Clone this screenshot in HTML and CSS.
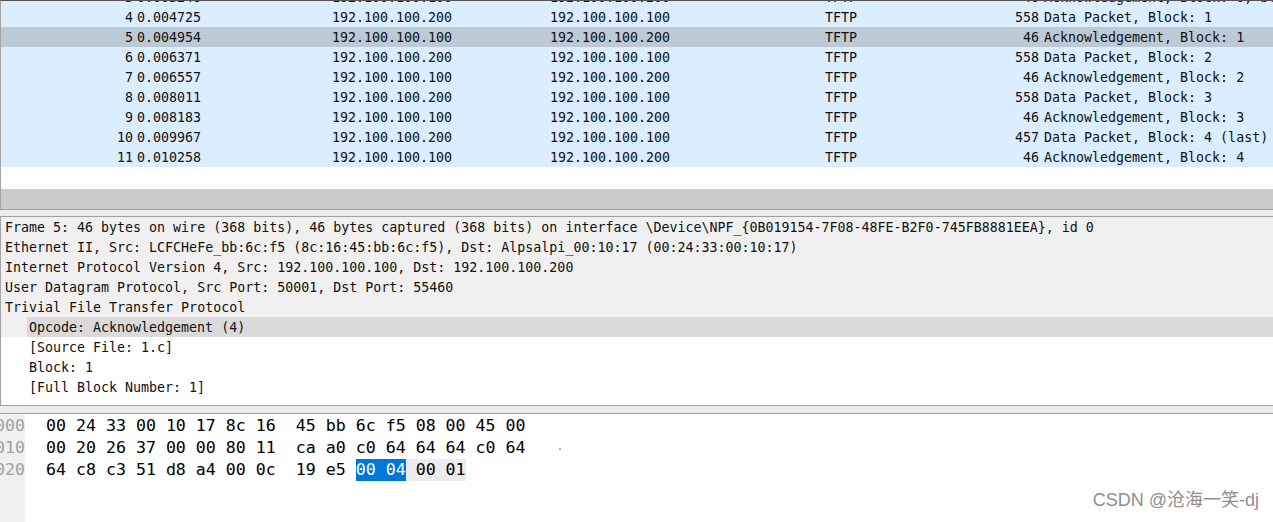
FILE: index.html
```html
<!DOCTYPE html>
<html>
<head>
<meta charset="utf-8">
<link rel="stylesheet" href="styles.css">
</head>
<body>
<div class="app">
  <div class="plist">
    <div class="prow partial"><span class="c-no">3</span><span class="c-time">0.003248</span><span class="c-src">192.100.100.100</span><span class="c-dst">192.100.100.200</span><span class="c-proto">TFTP</span><span class="c-len">46</span><span class="c-info">Acknowledgement, Block: 0, blksize</span></div>
    <div class="prow"><span class="c-no">4</span><span class="c-time">0.004725</span><span class="c-src">192.100.100.200</span><span class="c-dst">192.100.100.100</span><span class="c-proto">TFTP</span><span class="c-len">558</span><span class="c-info">Data Packet, Block: 1</span></div>
    <div class="prow sel"><span class="c-no">5</span><span class="c-time">0.004954</span><span class="c-src">192.100.100.100</span><span class="c-dst">192.100.100.200</span><span class="c-proto">TFTP</span><span class="c-len">46</span><span class="c-info">Acknowledgement, Block: 1</span></div>
    <div class="prow"><span class="c-no">6</span><span class="c-time">0.006371</span><span class="c-src">192.100.100.200</span><span class="c-dst">192.100.100.100</span><span class="c-proto">TFTP</span><span class="c-len">558</span><span class="c-info">Data Packet, Block: 2</span></div>
    <div class="prow"><span class="c-no">7</span><span class="c-time">0.006557</span><span class="c-src">192.100.100.100</span><span class="c-dst">192.100.100.200</span><span class="c-proto">TFTP</span><span class="c-len">46</span><span class="c-info">Acknowledgement, Block: 2</span></div>
    <div class="prow"><span class="c-no">8</span><span class="c-time">0.008011</span><span class="c-src">192.100.100.200</span><span class="c-dst">192.100.100.100</span><span class="c-proto">TFTP</span><span class="c-len">558</span><span class="c-info">Data Packet, Block: 3</span></div>
    <div class="prow"><span class="c-no">9</span><span class="c-time">0.008183</span><span class="c-src">192.100.100.100</span><span class="c-dst">192.100.100.200</span><span class="c-proto">TFTP</span><span class="c-len">46</span><span class="c-info">Acknowledgement, Block: 3</span></div>
    <div class="prow"><span class="c-no">10</span><span class="c-time">0.009967</span><span class="c-src">192.100.100.200</span><span class="c-dst">192.100.100.100</span><span class="c-proto">TFTP</span><span class="c-len">457</span><span class="c-info">Data Packet, Block: 4 (last)</span></div>
    <div class="prow"><span class="c-no">11</span><span class="c-time">0.010258</span><span class="c-src">192.100.100.100</span><span class="c-dst">192.100.100.200</span><span class="c-proto">TFTP</span><span class="c-len">46</span><span class="c-info">Acknowledgement, Block: 4</span></div>
  </div>
  <div class="hscroll"></div>
  <div class="splitter s1"></div>
  <div class="details">
    <div class="drow top">Frame 5: 46 bytes on wire (368 bits), 46 bytes captured (368 bits) on interface \Device\NPF_{0B019154-7F08-48FE-B2F0-745FB8881EEA}, id 0</div>
    <div class="drow top">Ethernet II, Src: LCFCHeFe_bb:6c:f5 (8c:16:45:bb:6c:f5), Dst: Alpsalpi_00:10:17 (00:24:33:00:10:17)</div>
    <div class="drow top">Internet Protocol Version 4, Src: 192.100.100.100, Dst: 192.100.100.200</div>
    <div class="drow top">User Datagram Protocol, Src Port: 50001, Dst Port: 55460</div>
    <div class="drow top">Trivial File Transfer Protocol</div>
    <div class="drow selrow"><div class="selinner">Opcode: Acknowledgement (4)</div></div>
    <div class="drow child">[Source File: 1.c]</div>
    <div class="drow child">Block: 1</div>
    <div class="drow child">[Full Block Number: 1]</div>
  </div>
  <div class="splitter s2"></div>
  <div class="bytes">
    <div class="gutter">
      <div class="off">0000</div>
      <div class="off">0010</div>
      <div class="off">0020</div>
    </div>
    <div class="hexcol">
      <div class="brow">00 24 33 00 10 17 8c 16  45 bb 6c f5 08 00 45 00</div>
      <div class="brow">00 20 26 37 00 00 80 11  ca a0 c0 64 64 64 c0 64<span class="dot"></span></div>
      <div class="brow">64 c8 c3 51 d8 a4 00 0c  19 e5 <span class="hl">00 04</span><span class="hl2"> 00 01</span></div>
    </div>
  </div>
  <div class="watermark">CSDN @沧海一笑-dj</div>
</div>
</body>
</html>
```
FILE: styles.css
```css
html, body {
  margin: 0;
  padding: 0;
  background: #ffffff;
}
.app {
  position: relative;
  width: 1273px;
  height: 522px;
  overflow: hidden;
  font-family: "DejaVu Sans Mono", "Liberation Mono", monospace;
  font-size: 13.3px;
  color: #111111;
}
.plist {
  height: 188px;
  border-top: 1px solid #555555;
  border-left: 1px solid #a3a3a3;
  overflow: hidden;
  background: #ffffff;
}
.prow {
  display: flex;
  height: 20px;
  line-height: 22px;
  white-space: pre;
  background: #daeeff;
}
.prow.partial {
  margin-top: -14px;
}
.prow.sel {
  background: #bccad6;
}
.c-no { width: 132px; text-align: right; flex: none; }
.c-time { width: 199px; padding-left: 4px; box-sizing: border-box; flex: none; }
.c-src { width: 218px; flex: none; }
.c-dst { width: 275px; flex: none; }
.c-proto { width: 150px; flex: none; }
.c-len { width: 64px; text-align: right; flex: none; }
.c-info { padding-left: 5px; flex: none; }

.hscroll {
  height: 20px;
  background: #cccccc;
  border-left: 1px solid #a3a3a3;
}
.splitter {
  border-top: 1px solid #a0a0a0;
  border-bottom: 1px solid #a0a0a0;
  background: #ececec;
}
.splitter.s1 { height: 6px; }
.splitter.s2 { height: 7px; }

.details {
  height: 188px;
  border-left: 1px solid #a3a3a3;
  background: #ffffff;
  overflow: hidden;
}
.drow {
  height: 20px;
  line-height: 22px;
  white-space: pre;
}
.drow.top {
  background: #f0f0f0;
  padding-left: 4px;
}
.drow.selrow {
  display: flex;
  background: #f0f0f0;
  padding-left: 26px;
}
.selinner {
  flex: 1;
  height: 20px;
  background: #dadada;
  padding-left: 2px;
}
.drow.child {
  padding-left: 28px;
}

.bytes {
  display: flex;
  height: 108px;
  font-size: 16.6px;
  color: #000000;
}
.gutter {
  width: 25px;
  flex: none;
  background: #f0f0f0;
  overflow: hidden;
  padding-top: 1px;
}
.off {
  height: 22px;
  line-height: 22px;
  display: flex;
  justify-content: flex-end;
  color: #a0a0a0;
  white-space: pre;
}
.hexcol {
  padding-left: 21px;
  padding-top: 1px;
}
.brow {
  height: 22px;
  line-height: 22px;
  white-space: pre;
}
.hl {
  background: #0078d7;
  color: #ffffff;
  display: inline-block;
  height: 22px;
}
.hl2 {
  background: #ececec;
  display: inline-block;
  height: 22px;
}
.dot {
  display: inline-block;
  width: 2px;
  height: 2px;
  background: #b0b0b0;
  margin-left: 33px;
  vertical-align: middle;
}
.watermark {
  position: absolute;
  right: 14px;
  bottom: 11px;
  font-family: "Liberation Sans", "Noto Sans CJK SC", sans-serif;
  font-size: 18px;
  color: #8f8f8f;
  text-shadow: 0 0 1px #ffffff;
}
```
